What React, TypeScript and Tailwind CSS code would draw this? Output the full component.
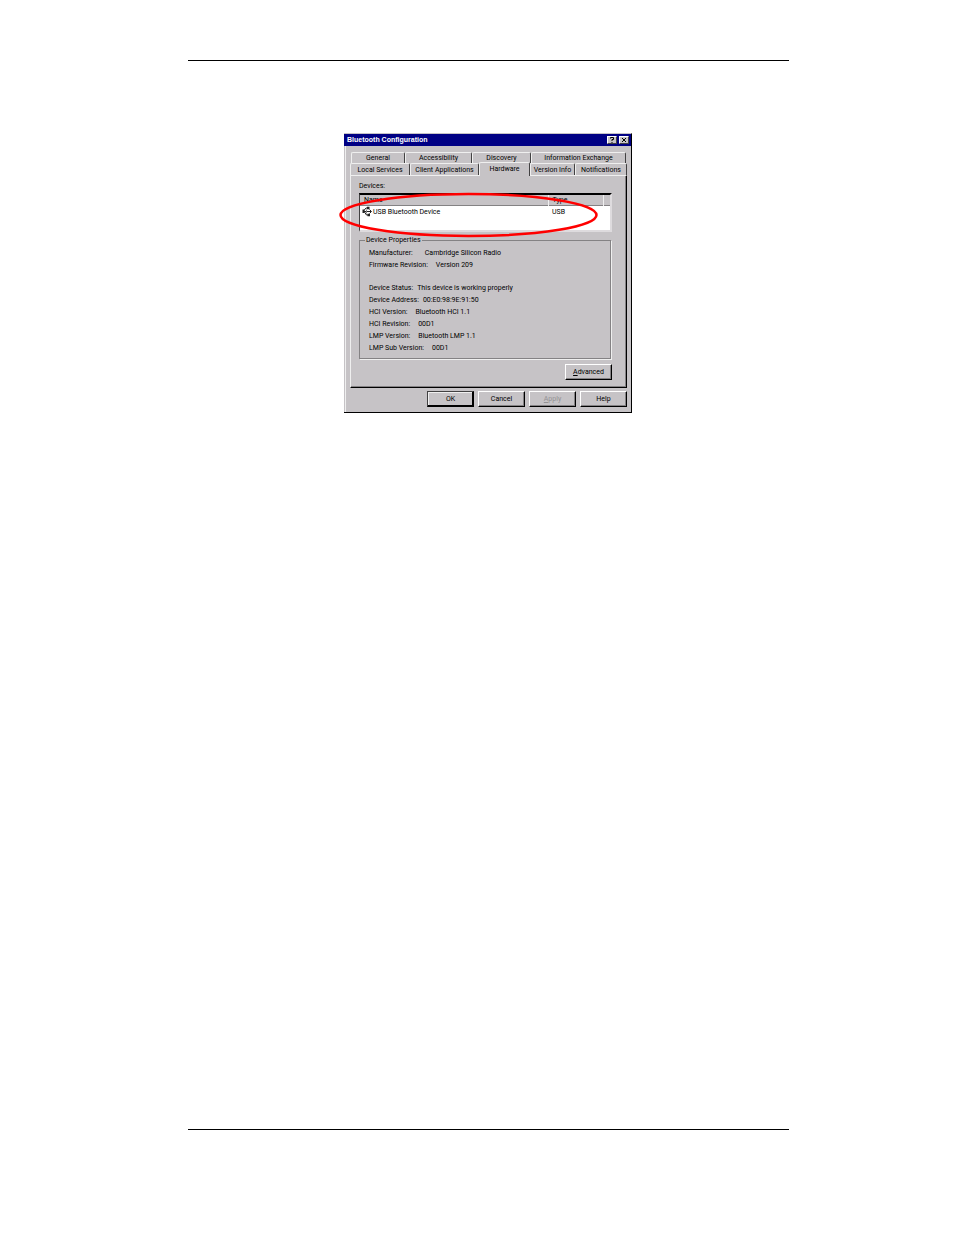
import React from 'react';

type Tab = { name: string; width: string };

const backTabs: Tab[] = [
  { name: 'General', width: 'w-[54px]' },
  { name: 'Accessibility', width: 'w-[67px]' },
  { name: 'Discovery', width: 'w-[59px]' },
  { name: 'Information Exchange', width: 'flex-1' },
];

const frontTabs: Tab[] = [
  { name: 'Local Services', width: 'w-[60px]' },
  { name: 'Client Applications', width: 'w-[69px]' },
  { name: 'Hardware', width: 'w-[51px]' },
  { name: 'Version Info', width: 'w-[45px]' },
  { name: 'Notifications', width: 'flex-1' },
];

const driverInfo = [
  { label: 'Manufacturer:', value: 'Cambridge Silicon Radio', gap: 'gap-3' },
  { label: 'Firmware Revision:', value: 'Version 209', gap: 'gap-2' },
];

const deviceInfo = [
  { label: 'Device Status:', value: 'This device is working properly', gap: 'gap-1' },
  { label: 'Device Address:', value: '00:E0:98:9E:91:50', gap: 'gap-1' },
  { label: 'HCI Version:', value: 'Bluetooth HCI 1.1', gap: 'gap-2' },
  { label: 'HCI Revision:', value: '00D1', gap: 'gap-2' },
  { label: 'LMP Version:', value: 'Bluetooth LMP 1.1', gap: 'gap-2' },
  { label: 'LMP Sub Version:', value: '00D1', gap: 'gap-2' },
];

function TabButton({ tab, active }: { tab: Tab; active?: boolean }) {
  return (
    <button
      role="tab"
      aria-selected={!!active}
      className={`${tab.width} whitespace-nowrap rounded-t-xs border-t border-l border-r border-t-[#efefef] border-l-[#efefef] border-r-[#424142] bg-[#c6c3c6] text-center ${
        active ? 'relative z-10 -mt-px -mb-px h-[14px] pb-0.5' : 'h-full'
      }`}
    >
      {tab.name}
    </button>
  );
}

function InfoList({ rows }: { rows: typeof deviceInfo }) {
  return (
    <dl>
      {rows.map((row) => (
        <div key={row.label} className={`flex h-3 items-center ${row.gap}`}>
          <dt>{row.label}</dt>
          <dd>{row.value}</dd>
        </div>
      ))}
    </dl>
  );
}

function PushButton({ children, disabled, isDefault }: { children: React.ReactNode; disabled?: boolean; isDefault?: boolean }) {
  return (
    <button
      disabled={disabled}
      className={`h-4 w-[47px] border border-r-black border-b-black disabled:text-[#949294] ${
        isDefault
          ? 'border-t-[#424142] border-l-[#424142] shadow-[inset_-1px_-1px_0_#000,inset_1px_1px_0_#efefef]'
          : 'border-t-white border-l-white shadow-[inset_-1px_-1px_0_#848284]'
      }`}
    >
      {children}
    </button>
  );
}

function UsbIcon() {
  return (
    <svg viewBox="0 0 10 11" className="h-[11px] w-[10px] shrink-0" fill="none" stroke="#222" aria-hidden="true">
      <path d="M1 5.500h8M7.500 3.500l2 2-2 2M1.500 5l2.500-3h2.500M2.500 6l2 3h2" />
      <path d="M5 .8h2.500v2.400H5zM5.500 7.800h2.500v2.400H5.500zM.5 3.500h2v3.500h-2z" fill="#222" stroke="none" />
      <path d="M4.500 3.500v4" stroke="#848284" />
    </svg>
  );
}

function ConfigDialog() {
  return (
    <section
      aria-label="Bluetooth Configuration"
      className="relative w-72 border-t border-r border-b border-t-[#c6c3c6] border-r-black border-b-black bg-[#c6c3c6] text-[7px] leading-[10px] text-black"
    >
      <header className="flex h-3 items-center justify-between bg-[#000084] pr-0.5 pl-[3px] text-white">
        <h1 className="font-bold [font-family:'Liberation_Sans',sans-serif]">Bluetooth Configuration</h1>
        <div className="flex gap-0.5">
          <button aria-label="Help" className="flex h-2 w-[10px] items-center justify-center border border-t-white border-l-white border-r-[#424142] border-b-[#424142] bg-[#c6c3c6]">
            <svg viewBox="0 0 6 6" className="h-1.5 w-1.5" fill="none" stroke="#000" aria-hidden="true">
              <path d="M1.500 1.500V.5h3v2H3v1.500M3 5v1" />
            </svg>
          </button>
          <button aria-label="Close" className="flex h-2 w-[10px] items-center justify-center border border-t-white border-l-white border-r-[#424142] border-b-[#424142] bg-[#c6c3c6]">
            <svg viewBox="0 0 6 6" className="h-1.5 w-1.5" fill="none" stroke="#000" aria-hidden="true">
              <path d="M1 1l4 4M5 1L1 5" />
            </svg>
          </button>
        </div>
      </header>

      <div className="ml-px border-l border-[#efefef] pt-1.5 pr-1 pb-[5px] pl-1">
        <div role="tablist" aria-label="Settings">
          <div className="flex h-[11px] px-px">
            {backTabs.map((tab) => (
              <TabButton key={tab.name} tab={tab} />
            ))}
          </div>
          <div className="flex h-3">
            {frontTabs.map((tab) => (
              <TabButton key={tab.name} tab={tab} active={tab.name === 'Hardware'} />
            ))}
          </div>
        </div>

        <div role="tabpanel" className="border border-t-[#efefef] border-l-[#efefef] border-r-black border-b-black px-2 pt-1 pb-[7px] shadow-[inset_-1px_-1px_0_#848284]">
          <p className="leading-3">Devices:</p>
          <div className="mt-px mr-1.5 h-[39px] border-t-2 border-r-2 border-b-2 border-l border-t-black border-r-[#dedbde] border-b-[#dedbde] border-l-[#424142] bg-white">
            <table className="w-full table-fixed text-left">
              <thead>
                <tr className="h-[10px] border-b border-[#848284] bg-[#c6c3c6]">
                  <th className="py-0 pl-1 font-normal">Name</th>
                  <th className="w-[55px] border-l border-l-[#efefef] py-0 pl-1 font-normal">Type</th>
                  <td className="w-[7px] border-l border-l-[#efefef]" />
                </tr>
              </thead>
              <tbody>
                <tr>
                  <td className="pl-0.5">
                    <span className="flex items-center gap-px">
                      <UsbIcon />
                      USB Bluetooth Device
                    </span>
                  </td>
                  <td className="pl-1">USB</td>
                  <td />
                </tr>
              </tbody>
            </table>
          </div>

          <fieldset className="mt-[3px] mr-[7px] border border-[#848284] px-[9px] pt-0.5 pb-1 shadow-[1px_1px_0_#efefef]">
            <legend className="-ml-1 px-px">Device Properties</legend>
            <div className="space-y-[11px]">
              <InfoList rows={driverInfo} />
              <InfoList rows={deviceInfo} />
            </div>
          </fieldset>

          <div className="mt-[5px] mr-1.5 flex justify-end">
            <PushButton>
              <span className="underline">A</span>dvanced
            </PushButton>
          </div>
        </div>

        <div className="mt-[3px] flex justify-end gap-1">
          <PushButton isDefault>OK</PushButton>
          <PushButton>Cancel</PushButton>
          <PushButton disabled>
            <span className="underline">A</span>pply
          </PushButton>
          <PushButton>Help</PushButton>
        </div>
      </div>

      <svg viewBox="0 0 260 46" className="pointer-events-none absolute top-[58px] -left-1.5 h-[46px] w-[260px]" fill="none" aria-hidden="true">
        <ellipse cx="130.500" cy="23" rx="128" ry="21" stroke="#ff0000" strokeWidth="2.500" />
      </svg>
    </section>
  );
}

export default function App() {
  return (
    <div className="min-h-screen bg-white pt-[60px] pr-[165px] pl-[188px] [font-family:Roboto,'Liberation_Sans',sans-serif]">
      <main className="flex min-h-[1070px] justify-center border-t border-b border-black pt-[72px] pr-px">
        <div>
          <ConfigDialog />
        </div>
      </main>
    </div>
  );
}
